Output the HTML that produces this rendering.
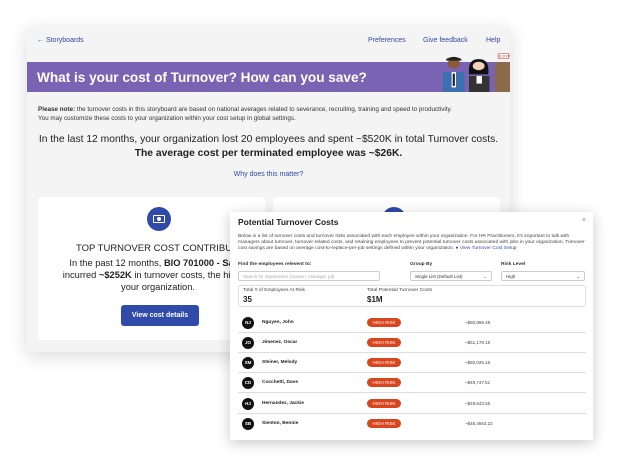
<!DOCTYPE html>
<html><head><meta charset="utf-8"><style>
*{box-sizing:border-box;margin:0;padding:0}
body{width:620px;height:469px;background:#fff;font-family:"Liberation Sans",sans-serif;position:relative;overflow:hidden;color:#222}
.win{position:absolute;left:27px;top:27px;width:483px;height:325px;background:#f4f4f5;box-shadow:0 4px 18px rgba(0,0,0,.15)}
.nav{position:absolute;top:10px;font-size:7px;color:#2f4aa8}
.banner{position:absolute;left:0;top:35px;width:483px;height:30px;background:#7a63b3;color:#fff;font-weight:bold;font-size:13.6px;padding:8px 10px}
.note{position:absolute;left:11px;top:78px;font-size:6.3px;line-height:9px;color:#333;white-space:nowrap}
.main{position:absolute;left:0;width:483px;text-align:center;font-size:10.3px;color:#222}
.card{position:absolute;top:170px;width:227px;height:143px;background:#fff;border-radius:4px}
.modal{position:absolute;left:230px;top:212px;width:363px;height:228px;background:#fff;box-shadow:0 3px 14px rgba(0,0,0,.22);border-radius:2px}
.m{position:absolute;font-size:4.9px;color:#444;line-height:6.2px}
.row{position:absolute;left:8px;width:348px;height:20px;border-bottom:1px solid #ddd}
.av{position:absolute;left:4px;top:4px;width:12px;height:12px;border-radius:50%;background:#111;color:#fff;font-size:4.5px;font-weight:bold;text-align:center;line-height:12px}
.nm{position:absolute;left:24px;top:7px;font-size:4.8px;font-weight:bold;color:#222}
.hr{position:absolute;left:129px;top:5px;width:34px;height:9px;border-radius:5px;background:#d9451c;color:#fff;font-size:4.5px;text-align:center;line-height:9px}
.amt{position:absolute;left:227px;top:7px;font-size:4.5px;color:#444}
.sel{position:absolute;height:10px;border:1px solid #ccc;border-radius:2px;font-size:4.5px;padding:2px 4px;color:#333}
</style></head><body>
<div class="win">
<div class="nav" style="left:10px">← Storyboards</div>
<div class="nav" style="left:341px">Preferences</div>
<div class="nav" style="left:396px">Give feedback</div>
<div class="nav" style="left:459px">Help</div>
<div class="banner">What is your cost of Turnover? How can you save?</div>
<svg style="position:absolute;left:416px;top:26px" width="67" height="39" viewBox="0 0 62 51" preserveAspectRatio="none">
<rect x="48" y="12" width="14" height="39" fill="#8a6a4a"/><rect x="51" y="1" width="10" height="6" fill="#fff" stroke="#c33" stroke-width=".6"/><text x="52" y="6" font-size="4.5" fill="#c33" font-family="Liberation Sans">EXIT</text>
<circle cx="10" cy="14" r="6" fill="#8a5a3a"/><path d="M3 8q7-6 14 0v2h-14z" fill="#222"/><rect x="0" y="25" width="20" height="26" fill="#3a6fb0"/><rect x="8" y="25" width="4" height="20" fill="#fff"/><rect x="9" y="27" width="2" height="16" fill="#222"/>
<path d="M24 22q0-14 9-14t9 14v6h-18z" fill="#111"/><circle cx="33" cy="17" r="5.5" fill="#f3d0b8"/><rect x="24" y="30" width="19" height="21" fill="#333"/><rect x="31" y="30" width="5" height="10" fill="#fff"/>
</svg>
<div class="note"><b>Please note:</b> the turnover costs in this storyboard are based on national averages related to severance, recruiting, training and speed to productivity.<br>You may customize these costs to your organization within your cost setup in global settings.</div>
<div class="main" style="top:107px">In the last 12 months, your organization lost 20 employees and spent ~$520K in total Turnover costs.</div>
<div class="main" style="top:121px;font-weight:bold">The average cost per terminated employee was ~$26K.</div>
<div class="main" style="top:144px;font-size:7px;color:#2f4aa8">Why does this matter?</div>
<div class="card" style="left:11px">
<div style="position:absolute;left:109px;top:10px;width:24px;height:24px;border-radius:50%;background:#2f4aa8"><div style="position:absolute;left:6px;top:8px;width:12px;height:8px;border:1.5px solid #fff;border-radius:1px"></div><div style="position:absolute;left:10px;top:10px;width:4px;height:4px;border-radius:50%;background:#fff"></div></div>
<div style="position:absolute;left:38px;top:46px;font-size:9.5px;white-space:nowrap">TOP TURNOVER COST CONTRIBUTOR</div>
<div style="position:absolute;left:0;width:240px;top:60px;font-size:9.3px;line-height:12px;text-align:center;white-space:nowrap">In the past 12 months, <b>BIO 701000 - Sales</b><br>incurred <b>~$252K</b> in turnover costs, the highest<br>your organization.</div>
<div style="position:absolute;left:83px;top:108px;width:78px;height:21px;background:#2f4aa8;border-radius:3px;color:#fff;font-size:7px;font-weight:bold;text-align:center;line-height:21px">View cost details</div>
</div>
<div class="card" style="left:246px"><div style="position:absolute;left:109px;top:10px;width:24px;height:24px;border-radius:50%;background:#2f4aa8"></div></div>
</div>
<div class="modal">
<div style="position:absolute;left:8px;top:5px;font-size:8.5px;font-weight:bold;color:#222">Potential Turnover Costs</div>
<div style="position:absolute;right:7px;top:5px;font-size:7px;color:#888">×</div>
<div class="m" style="left:8px;top:22px;width:350px">Below is a list of turnover costs and turnover risks associated with each employee within your organization. For HR Practitioners, it's important to talk with managers about turnover, turnover-related costs, and retaining employees to prevent potential turnover costs associated with jobs in your organization. Turnover cost savings are based on average cost-to-replace-per-job settings defined within your organization. <span style="color:#2f4aa8">● View Turnover Cost Setup</span></div>
<div class="m" style="left:8px;top:50px;font-weight:bold;color:#333">Find the employees relevent to:</div>
<div class="m" style="left:180px;top:50px;font-weight:bold;color:#333">Group By</div>
<div class="m" style="left:271px;top:50px;font-weight:bold;color:#333">Risk Level</div>
<div class="sel" style="left:8px;top:59px;width:142px;color:#aaa">Search for department, location, manager, job</div>
<div class="sel" style="left:180px;top:59px;width:82px">Single List (Default List)<span style="float:right;color:#2f4aa8">⌄</span></div>
<div class="sel" style="left:271px;top:59px;width:84px">High<span style="float:right;color:#2f4aa8">⌄</span></div>
<div style="position:absolute;left:8px;top:73px;width:348px;height:22px;border:1px solid #ddd;border-radius:3px">
<div class="m" style="left:4px;top:2px">Total # of Employees At Risk</div><div style="position:absolute;left:4px;top:9px;font-size:8px;font-weight:bold">35</div>
<div class="m" style="left:128px;top:2px">Total Potential Turnover Costs</div><div style="position:absolute;left:128px;top:9px;font-size:8px;font-weight:bold">$1M</div>
</div>
<div class="row" style="top:101px"><div class="av">NJ</div><div class="nm">Nguyen, John</div><div class="hr">HIGH RISK</div><div class="amt">~$60,869.48</div></div>
<div class="row" style="top:121px"><div class="av">JO</div><div class="nm">Jimenez, Oscar</div><div class="hr">HIGH RISK</div><div class="amt">~$51,178.15</div></div>
<div class="row" style="top:141px"><div class="av">SM</div><div class="nm">Steiner, Melody</div><div class="hr">HIGH RISK</div><div class="amt">~$50,025.16</div></div>
<div class="row" style="top:161px"><div class="av">CD</div><div class="nm">Cocchetti, Dave</div><div class="hr">HIGH RISK</div><div class="amt">~$49,747.51</div></div>
<div class="row" style="top:182px"><div class="av">HJ</div><div class="nm">Hernandez, Jackie</div><div class="hr">HIGH RISK</div><div class="amt">~$49,643.55</div></div>
<div class="row" style="top:202px;border:none"><div class="av">SB</div><div class="nm">Sienton, Bennie</div><div class="hr">HIGH RISK</div><div class="amt">~$46,4563.22</div></div>
</div>
</body></html>
